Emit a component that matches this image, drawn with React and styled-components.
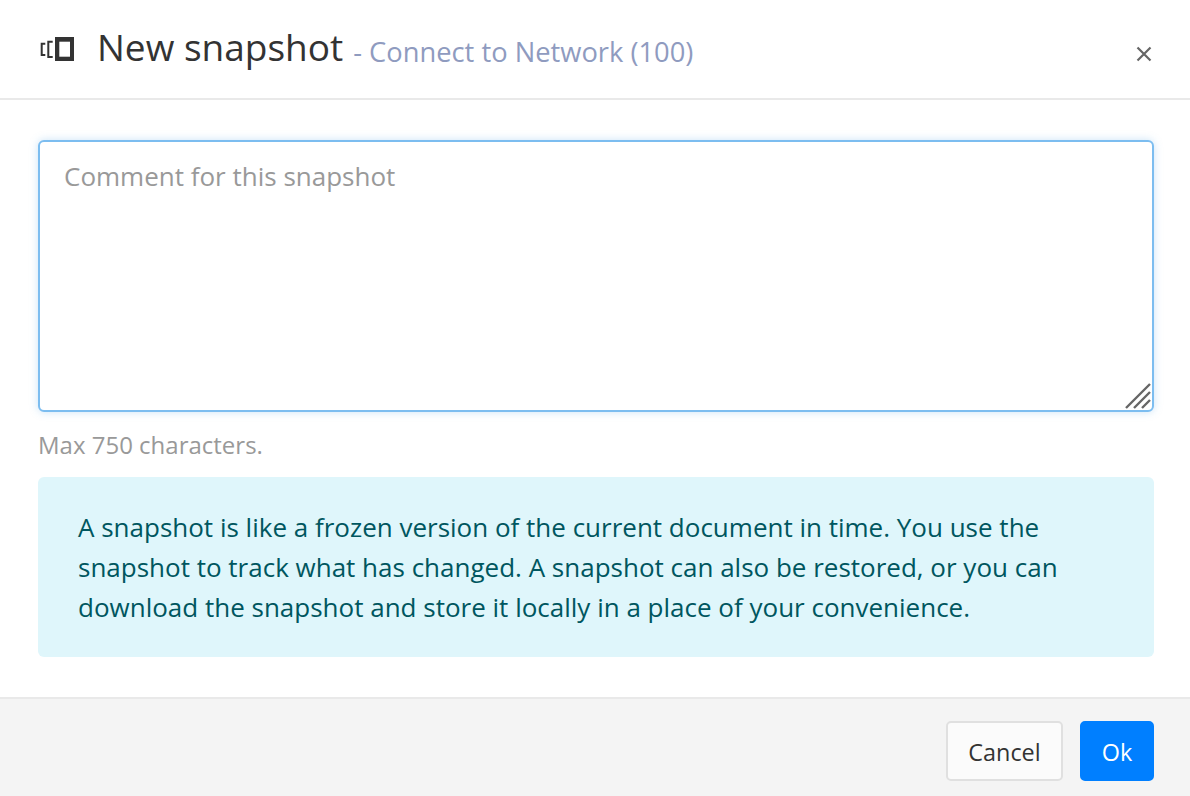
import React from 'react'
import styled, { createGlobalStyle } from 'styled-components'

const GlobalStyle = createGlobalStyle`
  html, body {
    margin: 0;
    padding: 0;
    background: #fff;
  }
  * {
    box-sizing: border-box;
  }
`

const Modal = styled.div`
  width: 1190px;
  height: 796px;
  display: flex;
  flex-direction: column;
  font-family: 'Open Sans', 'Noto Sans', sans-serif;
  color: #333;
`

const Header = styled.header`
  height: 100px;
  display: flex;
  align-items: center;
  padding: 0 37px 0 40px;
  border-bottom: 2px solid #e9e9e9;
`

const SnapshotIcon = styled.svg`
  width: 34px;
  height: 24px;
  margin-right: 23px;
  flex: none;
`

const Title = styled.h1`
  margin: 0;
  font-size: 37px;
  font-weight: 400;
  line-height: 48px;
  color: #333;
`

const Subtitle = styled.span`
  margin-left: 10px;
  font-size: 27.3px;
  color: #8f9bbf;
  vertical-align: -1px;
`

const CloseButton = styled.button`
  margin: 9px 0 0 auto;
  padding: 0;
  width: 18px;
  height: 18px;
  border: 0;
  background: none;
  color: #666;
  display: flex;
`

const Body = styled.main`
  flex: 1;
  padding: 40px 36px 0 38px;
  display: flex;
  flex-direction: column;
`

const CommentField = styled.div`
  position: relative;
  height: 272px;
`

const Comment = styled.textarea`
  display: block;
  width: 100%;
  height: 100%;
  padding: 16px 24px;
  border: 2px solid #7cbdf0;
  border-radius: 6px;
  box-shadow: 0 0 8px rgba(102, 175, 233, 0.35);
  outline: none;
  resize: none;
  font-family: inherit;
  font-size: 26px;
  line-height: 36px;
  color: #333;

  &::placeholder {
    color: #999;
    opacity: 1;
  }
`

const ResizeGrip = styled.svg`
  position: absolute;
  right: 3px;
  bottom: 3px;
  width: 26px;
  height: 26px;
`

const Hint = styled.p`
  margin: 17px 0 16px;
  font-size: 24px;
  line-height: 32px;
  color: #999;
`

const Info = styled.div`
  height: 180px;
  padding: 30px 40px 0;
  border-radius: 6px;
  background: #dff6fb;
  color: #00565f;
  font-size: 26px;
  line-height: 40px;
`

const Footer = styled.footer`
  height: 99px;
  padding: 22px 36px 0 0;
  display: flex;
  justify-content: flex-end;
  align-items: flex-start;
  gap: 17px;
  background: #f4f4f4;
  border-top: 2px solid #e9e9e9;
`

const Button = styled.button`
  height: 60px;
  padding: 2px 0 0;
  border-radius: 5px;
  font-family: inherit;
  font-size: 23.4px;
  border: 2px solid ${(p) => (p.$primary ? '#007fff' : '#e0e0e0')};
  background: ${(p) => (p.$primary ? '#007fff' : '#fbfbfb')};
  color: ${(p) => (p.$primary ? '#fff' : '#333')};
  width: ${(p) => (p.$primary ? '74px' : '117px')};
`

export default function App() {
  return (
    <>
      <GlobalStyle />
      <Modal>
        <Header>
          <SnapshotIcon viewBox="0 0 34 24" aria-hidden="true">
            <path d="M5.3 6.7H1.7V18H5.3" fill="none" stroke="#333" strokeWidth="2" />
            <path d="M12.7 4.7H8.3V20H12.7" fill="none" stroke="#333" strokeWidth="2" />
            <rect x="15" y="0" width="19" height="24" fill="#333" />
            <rect x="19.3" y="4.7" width="10.7" height="15" fill="#fff" />
          </SnapshotIcon>
          <Title>
            New snapshot
            <Subtitle>- Connect to Network (100)</Subtitle>
          </Title>
          <CloseButton aria-label="Close">
            <svg width="18" height="18" viewBox="0 0 18 18">
              <path d="M2.5 2.5L15.5 15.5M15.5 2.5L2.5 15.5" stroke="currentColor" strokeWidth="2.2" />
            </svg>
          </CloseButton>
        </Header>
        <Body>
          <CommentField>
            <Comment placeholder="Comment for this snapshot" />
            <ResizeGrip viewBox="0 0 26 26" aria-hidden="true">
              <path
                d="M1 25L25 1M9 25L25 9M17 25L25 17"
                stroke="#666"
                strokeWidth="2.4"
                fill="none"
              />
            </ResizeGrip>
          </CommentField>
          <Hint>Max 750 characters.</Hint>
          <Info>
            A snapshot is like a frozen version of the current document in time. You use the
            snapshot to track what has changed. A snapshot can also be restored, or you can
            download the snapshot and store it locally in a place of your convenience.
          </Info>
        </Body>
        <Footer>
          <Button>Cancel</Button>
          <Button $primary>Ok</Button>
        </Footer>
      </Modal>
    </>
  )
}
